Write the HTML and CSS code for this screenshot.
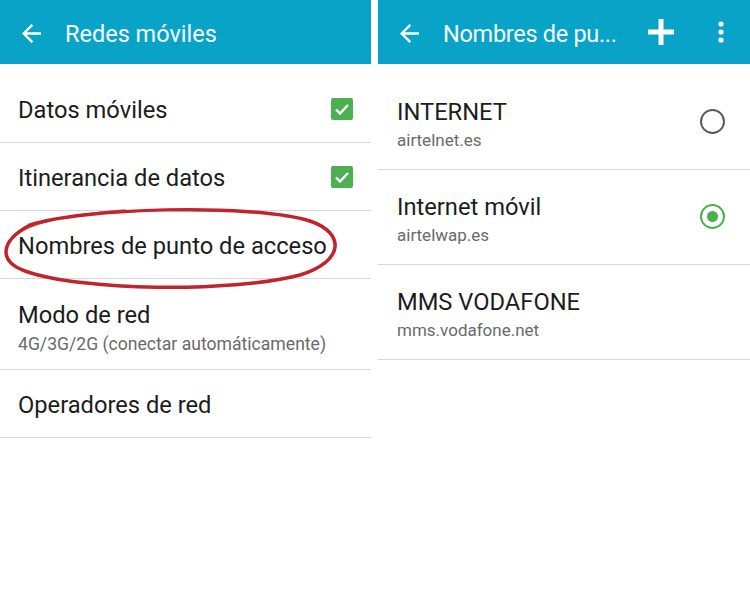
FILE: index.html
```html
<!DOCTYPE html>
<html lang="es">
<head>
<meta charset="utf-8">
<title>Redes móviles</title>
<link rel="stylesheet" href="styles.css">
</head>
<body>
<div class="screen">
  <section class="panel panel-left">
    <header class="appbar">
      <svg class="back" viewBox="4 4 16 16" width="19" height="19" aria-hidden="true"><path d="M20 11H7.83l5.59-5.59L12 4l-8 8 8 8 1.41-1.41L7.83 13H20v-2z" fill="#fff"/></svg>
      <h1 class="title">Redes móviles</h1>
    </header>
    <ul class="list">
      <li class="row single">
        <span class="label">Datos móviles</span>
        <svg class="check" viewBox="0 0 22 22" width="22" height="22" aria-hidden="true"><rect x="0" y="0" width="22" height="22" rx="2" fill="#4caf50"/><path d="M5 11.5l4 4 8-8.5" fill="none" stroke="#fff" stroke-width="2.4"/></svg>
      </li>
      <li class="row single">
        <span class="label">Itinerancia de datos</span>
        <svg class="check" viewBox="0 0 22 22" width="22" height="22" aria-hidden="true"><rect x="0" y="0" width="22" height="22" rx="2" fill="#4caf50"/><path d="M5 11.5l4 4 8-8.5" fill="none" stroke="#fff" stroke-width="2.4"/></svg>
      </li>
      <li class="row single">
        <span class="label">Nombres de punto de acceso</span>
      </li>
      <li class="row double">
        <div class="texts">
          <span class="label">Modo de red</span>
          <span class="sub sub-left">4G/3G/2G (conectar automáticamente)</span>
        </div>
      </li>
      <li class="row single">
        <span class="label">Operadores de red</span>
      </li>
    </ul>
    <svg class="mark" viewBox="0 0 345 92" width="345" height="92" aria-hidden="true">
      <path d="M30 22 C80 5 250 0 310 18 C345 30 345 58 300 72 C230 90 80 88 25 68 C-2 58 0 38 30 22 Z" fill="none" stroke="#c0242c" stroke-width="3.5" stroke-linejoin="round"/>
      <path d="M12 36 C24 22 60 12 125 7" fill="none" stroke="#c0242c" stroke-width="1.6" stroke-linecap="round" opacity="0.8"/>
    </svg>
  </section>
  <section class="panel panel-right">
    <header class="appbar">
      <svg class="back" viewBox="4 4 16 16" width="19" height="19" aria-hidden="true"><path d="M20 11H7.83l5.59-5.59L12 4l-8 8 8 8 1.41-1.41L7.83 13H20v-2z" fill="#fff"/></svg>
      <h1 class="title">Nombres de pu...</h1>
      <div class="actions">
        <svg class="plus" viewBox="0 0 26 26" width="26" height="26" aria-hidden="true"><rect x="0" y="10.5" width="26" height="5" fill="#fff"/><rect x="10.5" y="0" width="5" height="26" fill="#fff"/></svg>
        <svg class="more" viewBox="0 0 6 22" width="6" height="22" aria-hidden="true"><circle cx="3" cy="3" r="2.6" fill="#fff"/><circle cx="3" cy="11" r="2.6" fill="#fff"/><circle cx="3" cy="19" r="2.6" fill="#fff"/></svg>
      </div>
    </header>
    <ul class="list">
      <li class="row apn">
        <div class="texts">
          <span class="label">INTERNET</span>
          <span class="sub">airtelnet.es</span>
        </div>
        <span class="radio"></span>
      </li>
      <li class="row apn">
        <div class="texts">
          <span class="label">Internet móvil</span>
          <span class="sub">airtelwap.es</span>
        </div>
        <span class="radio on"></span>
      </li>
      <li class="row apn">
        <div class="texts">
          <span class="label">MMS VODAFONE</span>
          <span class="sub">mms.vodafone.net</span>
        </div>
      </li>
    </ul>
  </section>
</div>
</body>
</html>
```

FILE: styles.css
```css
* { box-sizing: border-box; }
html, body { margin: 0; padding: 0; background: #fff; }
body {
  font-family: Roboto, "Noto Sans", "Liberation Sans", sans-serif;
  width: 750px;
  height: 592px;
  overflow: hidden;
}
.screen {
  display: flex;
  gap: 7px;
  height: 592px;
}
.panel {
  position: relative;
  background: #fff;
}
.panel-left { width: 371px; }
.panel-right { flex: 1; }

.appbar {
  height: 64px;
  background: #0aa3c8;
  display: flex;
  align-items: center;
  padding-top: 3px;
  color: #f4fcff;
}
.back { flex: none; }
.panel-left .back { margin-left: 22px; margin-right: 24px; }
.panel-right .back { margin-left: 22px; margin-right: 24px; }
.title {
  margin: 0;
  font-weight: 400;
  font-size: 23.5px;
  line-height: 28px;
  white-space: nowrap;
}
.panel-right .title { letter-spacing: -0.3px; }
.actions {
  margin-left: auto;
  display: flex;
  align-items: center;
  margin-top: -3px;
}
.plus { margin-right: 44px; }
.more { margin-right: 26px; }

.list {
  list-style: none;
  margin: 0;
  padding: 11px 0 0;
}
.row {
  display: flex;
  align-items: center;
  border-bottom: 1px solid #d8d8d8;
  padding-left: 18px;
  padding-right: 18px;
}
.row.single { height: 68px; padding-top: 3px; }
.row.double { height: 91px; align-items: flex-start; padding-top: 22px; }
.row.apn { height: 95px; padding-left: 19px; padding-right: 25px; }
.row.apn .texts { padding-top: 4px; }
.row.apn .radio { margin-top: -2px; }

.texts { display: flex; flex-direction: column; }
.label {
  font-size: 23.7px;
  line-height: 28px;
  color: #1c1c1c;
  white-space: nowrap;
}
.sub {
  font-size: 17px;
  line-height: 22px;
  margin-top: 3px;
  color: #6a6a6a;
  white-space: nowrap;
}
.sub-left { font-size: 17.6px; margin-top: 4px; }
.check { margin-left: auto; margin-top: -3px; flex: none; }

.radio {
  margin-left: auto;
  width: 25px;
  height: 25px;
  border-radius: 50%;
  border: 2px solid #5a5a5a;
  flex: none;
  position: relative;
}
.radio.on { border-color: #4caf50; }
.radio.on::after {
  content: "";
  position: absolute;
  left: 5px;
  top: 5px;
  width: 11px;
  height: 11px;
  border-radius: 50%;
  background: #4caf50;
}

.mark {
  position: absolute;
  left: 0;
  top: 203px;
  pointer-events: none;
}
```
